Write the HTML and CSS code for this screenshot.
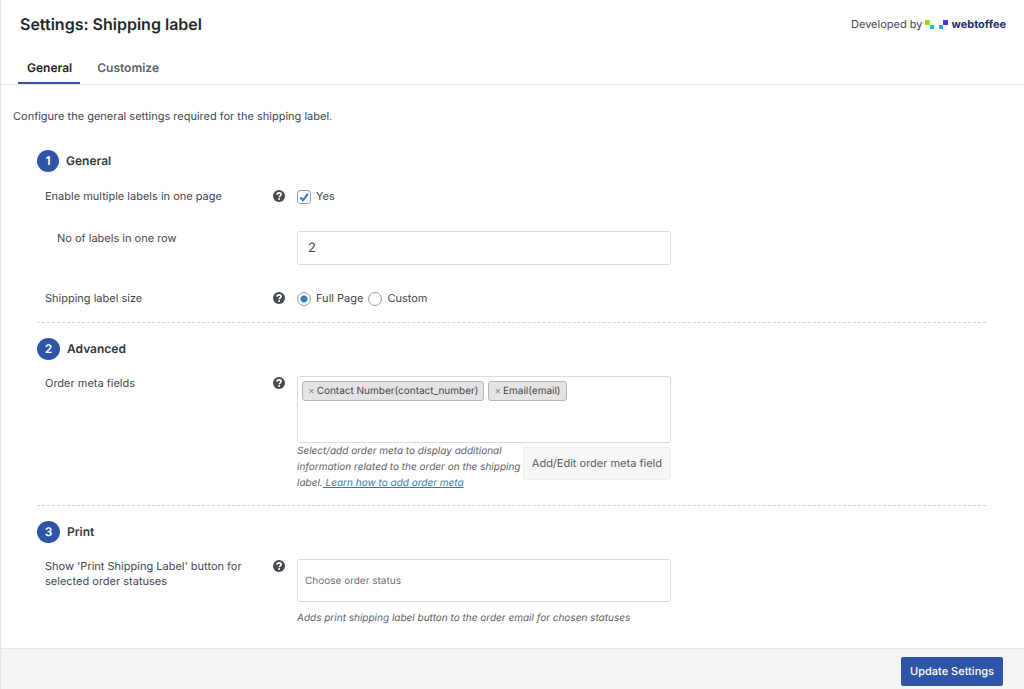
FILE: index.html
```html
<!DOCTYPE html>
<html lang="en">
<head>
<meta charset="utf-8">
<title>Settings: Shipping label</title>
<link rel="stylesheet" href="styles.css">
</head>
<body>
<svg class="defs" width="0" height="0" aria-hidden="true">
  <symbol id="help" viewBox="0 0 12 12">
    <circle cx="6" cy="6" r="6" fill="#444b53"/>
    <path d="M4 4.8C4 3.5 4.9 2.9 6.1 2.9s2 .6 2 1.6c0 1.3-1.8 1.3-1.9 2.7" fill="none" stroke="#fff" stroke-width="1.6"/>
    <circle cx="6.1" cy="9" r="1" fill="#fff"/>
  </symbol>
</svg>
<form class="panel">
  <header class="header">
    <h1 class="title">Settings: Shipping label</h1>
    <div class="credit">
      <span>Developed by</span>
      <svg class="mark" viewBox="0 0 23 9" aria-hidden="true">
        <rect x="0" y="0" width="5" height="5" rx=".5" fill="#a0db12"/>
        <rect x="5" y="5" width="4" height="4" rx=".5" fill="#0fc1d6"/>
        <rect x="14" y="5" width="4" height="4" rx=".5" fill="#27a4fa"/>
        <rect x="18" y="0" width="5" height="5" rx=".5" fill="#4a35e0"/>
      </svg>
      <span class="brand">webtoffee</span>
    </div>
  </header>
  <nav class="tabs">
    <a class="tab tab-active" href="#general">General</a>
    <a class="tab" href="#customize">Customize</a>
  </nav>
  <main class="content">
    <p class="intro">Configure the general settings required for the shipping label.</p>

    <section class="section">
      <h2 class="heading"><span class="step">1</span>General</h2>
      <div class="row">
        <label class="label" for="multiple">Enable multiple labels in one page</label>
        <svg class="help"><use href="#help"/></svg>
        <div class="choices">
          <label class="choice"><input class="box" id="multiple" type="checkbox" checked>Yes</label>
        </div>
      </div>
      <div class="row row-tall">
        <label class="label label-sub" for="per-row">No of labels in one row</label>
        <input class="field number" id="per-row" type="text" value="2">
      </div>
      <div class="row">
        <span class="label">Shipping label size</span>
        <svg class="help"><use href="#help"/></svg>
        <div class="choices">
          <label class="choice"><input class="radio" type="radio" name="size" checked>Full Page</label>
          <label class="choice"><input class="radio" type="radio" name="size">Custom</label>
        </div>
      </div>
    </section>

    <section class="section">
      <h2 class="heading"><span class="step">2</span>Advanced</h2>
      <div class="row">
        <span class="label">Order meta fields</span>
        <svg class="help"><use href="#help"/></svg>
        <div class="control">
          <div class="field tags">
            <span class="tag"><button class="remove" type="button" aria-label="Remove Contact Number">×</button>Contact Number(contact_number)</span>
            <span class="tag"><button class="remove" type="button" aria-label="Remove Email">×</button>Email(email)</span>
          </div>
          <div class="below">
            <p class="hint">Select/add order meta to display additional information related to the order on the shipping label.<a class="link" href="#learn"> Learn how to add order meta</a></p>
            <button class="secondary" type="button">Add/Edit order meta field</button>
          </div>
        </div>
      </div>
    </section>

    <section class="section">
      <h2 class="heading"><span class="step">3</span>Print</h2>
      <div class="row">
        <label class="label" for="statuses">Show 'Print Shipping Label' button for selected order statuses</label>
        <svg class="help"><use href="#help"/></svg>
        <div class="control">
          <input class="field status" id="statuses" type="text" placeholder="Choose order status">
          <p class="hint hint-spaced">Adds print shipping label button to the order email for chosen statuses</p>
        </div>
      </div>
    </section>
  </main>
  <footer class="footer">
    <button class="primary" type="submit">Update Settings</button>
  </footer>
</form>
</body>
</html>
```
FILE: styles.css
```css
* { box-sizing: border-box; }
body {
  margin: 0;
  background: #fff;
  color: #3f474f;
  font: 11px/15px Inter, "Liberation Sans", sans-serif;
  text-rendering: geometricPrecision;
}
h1, h2, p { margin: 0; }
button, input { font: inherit; color: inherit; text-rendering: inherit; }
.defs { display: block; }

.panel {
  display: flex;
  flex-direction: column;
  min-height: 100vh;
  border-left: 1px solid #e4e5e6;
}
.header {
  display: flex;
  justify-content: space-between;
  align-items: center;
  padding: 12px 18px 0 19px;
}
.title {
  color: #23282d;
  font-size: 16px;
  line-height: 24px;
  font-weight: 600;
}
.credit { display: flex; align-items: center; gap: 3px; }
.mark { width: 23px; height: 9px; }
.brand {
  color: #20306b;
  font: 700 11px/15px Inter, sans-serif;
}

.tabs {
  display: flex;
  gap: 8px;
  padding: 16px 17px 0;
  border-bottom: 1px solid #e6e7e8;
}
.tab {
  padding: 8px 8px 6px 9px;
  border-bottom: 2px solid transparent;
  color: #5a626b;
  font-size: 12px;
  line-height: 16px;
  font-weight: 600;
  text-decoration: none;
}
.tab-active { color: #1d2327; border-color: #2f55a8; }

.content { flex: 1; padding: 24px 38px 0 12px; }
.intro { margin-bottom: 12px; }

.section { margin-left: 24px; padding: 14px 0 16px; }
.section + .section { border-top: 1px dashed #d3d5d7; padding: 15px 0 14px; }
.section + .section .step { width: 23px; }
.section + .section .row { padding-top: 16px; }
.heading {
  display: flex;
  align-items: center;
  gap: 7px;
  color: #32393f;
  font-size: 12px;
  line-height: 22px;
  font-weight: 600;
}
.step {
  width: 22px;
  height: 22px;
  border-radius: 50%;
  background: #2f55a8;
  color: #fff;
  text-align: center;
}

.row {
  display: grid;
  grid-template-columns: 228px 24px minmax(0, 374px);
  padding: 17px 0 0 8px;
}
.row-tall { padding-top: 27px; padding-bottom: 9px; }
.row-tall .field { grid-column: 3; }
.label { padding-right: 20px; }
.label-sub { padding-left: 12px; }
.help { width: 12px; height: 12px; margin-top: 1px; }
.choices { display: flex; gap: 5px; }
.choice { display: flex; align-items: center; gap: 5px; }

.box, .radio {
  appearance: none;
  width: 14px;
  height: 14px;
  margin: 0;
  border: 1px solid #9a9da1;
  background: #fff center / 12px 12px no-repeat;
}
.box {
  border-radius: 3px;
}
.box:checked {
  background-image: url("data:image/svg+xml,%3Csvg xmlns='http://www.w3.org/2000/svg' viewBox='0 0 12 12'%3E%3Cpath d='M2.3 6.5 5 9.2 9.9 2.8' fill='none' stroke='%232f80c8' stroke-width='2.2'/%3E%3C/svg%3E");
}
.radio { border-radius: 50%; }
.radio:checked { background-image: radial-gradient(circle, #2f80c8 3px, transparent 4px); }

.field {
  width: 100%;
  border: 1px solid #d9dce1;
  border-radius: 3px;
  background: #fff;
}
.number { height: 34px; padding: 0 10px; font-size: 13px; }
.tags {
  display: flex;
  flex-wrap: wrap;
  align-content: flex-start;
  gap: 4px;
  min-height: 67px;
  padding: 4px;
}
.tag {
  display: flex;
  align-items: center;
  height: 20px;
  padding: 0 5px;
  border: 1px solid #b4b6b8;
  border-radius: 3px;
  background: #e4e4e4;
  font-size: 10px;
}
.remove {
  padding: 0 2px 0 0;
  border: 0;
  background: none;
  color: #8a8d90;
}
.below { display: flex; justify-content: space-between; align-items: flex-start; }
.hint { color: #5c6167; font-size: 10px; font-style: italic; }
.below .hint { flex: 1; line-height: 16px; }
.hint-spaced { margin-top: 9px; }
.link { color: #2f7ab8; }
.secondary {
  height: 33px;
  margin-top: 4px;
  padding: 0 8px;
  border: 1px solid #eceeef;
  border-radius: 3px;
  background: #f6f7f7;
  color: #555b61;
}
.status { height: 43px; padding: 0 7px; font-size: 10px; }
.status::placeholder { color: #6a7076; opacity: 1; }

.footer {
  display: flex;
  justify-content: flex-end;
  padding: 8px 21px 3px;
  border-top: 1px solid #e3e4e5;
  background: #f4f4f4;
}
.primary {
  height: 29px;
  padding: 0 9px;
  border: 0;
  border-radius: 2px;
  background: #2f55a8;
  color: #fff;
  font-weight: 500;
}
```
